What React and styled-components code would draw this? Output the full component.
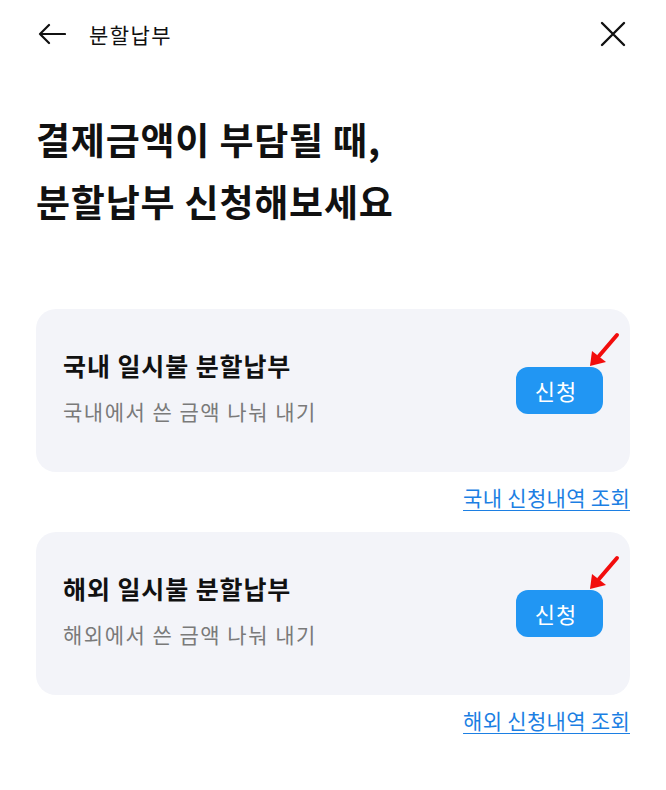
import React from "react";
import styled, { createGlobalStyle } from "styled-components";

const GlobalStyle = createGlobalStyle`
  html, body {
    margin: 0;
    padding: 0;
    background: #ffffff;
  }
  body {
    font-family: "Noto Sans CJK KR", "Noto Sans", sans-serif;
    color: #111111;
    -webkit-font-smoothing: antialiased;
  }
  * { box-sizing: border-box; }
`;

const Page = styled.div`
  width: 666px;
  min-height: 790px;
  background: #ffffff;
`;

const Header = styled.header`
  height: 68px;
  display: flex;
  align-items: center;
  padding: 0 40px 0 38px;
`;

const IconButton = styled.button`
  border: 0;
  background: none;
  padding: 0;
  margin: 0;
  display: flex;
  align-items: center;
  justify-content: center;
  color: #111;
  cursor: pointer;
`;

const HeaderTitle = styled.h1`
  margin: 0 0 0 23px;
  font-size: 21px;
  font-weight: 400;
  line-height: 1;
  letter-spacing: 1.4px;
  flex: 1;
  color: #111;
`;

const Headline = styled.h2`
  margin: 40px 0 0 36px;
  font-size: 37px;
  font-weight: 700;
  line-height: 62px;
  letter-spacing: 0.8px;
  color: #111;
`;

const List = styled.section`
  margin: 77px 36px 0;
  display: flex;
  flex-direction: column;
`;

const Card = styled.div`
  height: 163px;
  margin-top: ${(p) => (p.$first ? "0" : "20px")};
  border-radius: 20px;
  background: #f3f4f9;
  display: flex;
  align-items: center;
  justify-content: space-between;
  padding: 0 27px 0 27px;
`;

const CardText = styled.div`
  display: flex;
  flex-direction: column;
  gap: 14px;
  margin-top: -8px;
`;

const CardTitle = styled.div`
  font-size: 25px;
  font-weight: 700;
  line-height: 34px;
  color: #111;
  letter-spacing: 0.9px;
`;

const CardSub = styled.div`
  font-size: 21px;
  font-weight: 400;
  line-height: 30px;
  letter-spacing: 1.5px;
  color: #7a7a7a;
`;

const ApplyButton = styled.button`
  position: relative;
  width: 87px;
  height: 47px;
  border: 0;
  border-radius: 12px;
  background: #2196f3;
  color: #ffffff;
  font-family: inherit;
  font-size: 22px;
  font-weight: 400;
  letter-spacing: 1px;
  padding: 0 7px 2px 0;
  cursor: pointer;
`;

const Pointer = styled.svg`
  position: absolute;
  left: 70px;
  top: -35px;
  width: 34px;
  height: 38px;
  pointer-events: none;
`;

const HistoryLink = styled.a`
  align-self: flex-end;
  margin-top: 10px;
  font-size: 21px;
  line-height: 30px;
  letter-spacing: 0.3px;
  color: #1c7fe3;
  text-decoration: underline;
  text-underline-offset: 4px;
  text-decoration-thickness: 1px;
  cursor: pointer;
`;

const BackIcon = () => (
  <svg width="28" height="22" viewBox="0 0 28 22" fill="none">
    <path
      d="M27 11H2M11 2L2 11l9 9"
      stroke="#111"
      strokeWidth="2.2"
      strokeLinecap="round"
      strokeLinejoin="round"
    />
  </svg>
);

const CloseIcon = () => (
  <svg width="26" height="26" viewBox="0 0 26 26" fill="none">
    <path
      d="M2 2l22 22M24 2L2 24"
      stroke="#111"
      strokeWidth="2.4"
      strokeLinecap="round"
    />
  </svg>
);

const ArrowMark = () => (
  <Pointer viewBox="0 0 34 38">
    <line x1="31" y1="3" x2="13" y2="24" stroke="#f20d0d" strokeWidth="4" strokeLinecap="round" />
    <polygon points="4,34 6,19 20,30" fill="#f20d0d" />
  </Pointer>
);

const plans = [
  {
    title: "국내 일시불 분할납부",
    sub: "국내에서 쓴 금액 나눠 내기",
    link: "국내 신청내역 조회",
  },
  {
    title: "해외 일시불 분할납부",
    sub: "해외에서 쓴 금액 나눠 내기",
    link: "해외 신청내역 조회",
  },
];

export default function App() {
  return (
    <Page>
      <GlobalStyle />
      <Header>
        <IconButton aria-label="뒤로">
          <BackIcon />
        </IconButton>
        <HeaderTitle>분할납부</HeaderTitle>
        <IconButton aria-label="닫기">
          <CloseIcon />
        </IconButton>
      </Header>
      <Headline>
        결제금액이 부담될 때,
        <br />
        분할납부 신청해보세요
      </Headline>
      <List>
        {plans.map((p, i) => (
          <React.Fragment key={p.title}>
            <Card $first={i === 0}>
              <CardText>
                <CardTitle>{p.title}</CardTitle>
                <CardSub>{p.sub}</CardSub>
              </CardText>
              <ApplyButton>
                신청
                <ArrowMark />
              </ApplyButton>
            </Card>
            <HistoryLink>{p.link}</HistoryLink>
          </React.Fragment>
        ))}
      </List>
    </Page>
  );
}
